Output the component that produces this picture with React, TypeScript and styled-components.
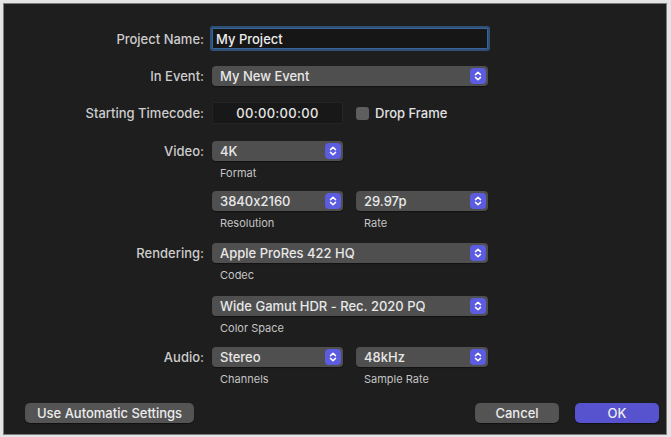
import React from 'react'
import styled, { createGlobalStyle } from 'styled-components'

const GlobalStyle = createGlobalStyle`
  html, body {
    margin: 0;
    padding: 0;
    background: #e4e4e4;
  }
  body {
    font-family: Inter, "Liberation Sans", sans-serif;
    font-feature-settings: "calt" 0;
    -webkit-font-smoothing: antialiased;
  }
  input {
    font-feature-settings: "calt" 0;
  }
`

const Stepper = () => (
  <S.StepperButton>
    <svg width="10" height="12" viewBox="0 0 10 12">
      <path d="M2.5 4.6 L5 2.3 L7.5 4.6" fill="none" stroke="#fff" strokeWidth="1.5" strokeLinecap="round" strokeLinejoin="round" />
      <path d="M2.5 7.4 L5 9.7 L7.5 7.4" fill="none" stroke="#fff" strokeWidth="1.5" strokeLinecap="round" strokeLinejoin="round" />
    </svg>
  </S.StepperButton>
)

interface PopupProps {
  value: string
  caption?: string
}

const Popup = ({ value, caption }: PopupProps) => (
  <S.Field>
    <S.PopupButton>
      <span>{value}</span>
      <Stepper />
    </S.PopupButton>
    {caption && <S.Caption>{caption}</S.Caption>}
  </S.Field>
)

const App = () => {
  return (
    <>
      <GlobalStyle />
      <S.Frame>
        <S.Dialog>
          <S.Row $top={0}>
            <S.Label>Project Name:</S.Label>
            <S.TextInput defaultValue="My Project" />
          </S.Row>

          <S.Row $top={17}>
            <S.Label>In Event:</S.Label>
            <Popup value="My New Event" />
          </S.Row>

          <S.Row $top={16}>
            <S.Label>Starting Timecode:</S.Label>
            <S.Pair>
              <S.Timecode>00:00:00:00</S.Timecode>
              <S.CheckRow>
                <S.Checkbox />
                <span>Drop Frame</span>
              </S.CheckRow>
            </S.Pair>
          </S.Row>

          <S.Row $top={17} $start>
            <S.Label>Video:</S.Label>
            <S.Pair>
              <Popup value="4K" caption="Format" />
            </S.Pair>
          </S.Row>

          <S.Row $top={11} $start>
            <S.Label />
            <S.Pair>
              <Popup value="3840x2160" caption="Resolution" />
              <Popup value="29.97p" caption="Rate" />
            </S.Pair>
          </S.Row>

          <S.Row $top={13} $start>
            <S.Label>Rendering:</S.Label>
            <Popup value="Apple ProRes 422 HQ" caption="Codec" />
          </S.Row>

          <S.Row $top={14} $start>
            <S.Label />
            <Popup value="Wide Gamut HDR - Rec. 2020 PQ" caption="Color Space" />
          </S.Row>

          <S.Row $top={12} $start>
            <S.Label>Audio:</S.Label>
            <S.Pair>
              <Popup value="Stereo" caption="Channels" />
              <Popup value="48kHz" caption="Sample Rate" />
            </S.Pair>
          </S.Row>

          <S.Footer>
            <S.Button $width={169}>Use Automatic Settings</S.Button>
            <S.Actions>
              <S.Button $width={84}>Cancel</S.Button>
              <S.Button $width={84} $primary>OK</S.Button>
            </S.Actions>
          </S.Footer>
        </S.Dialog>
      </S.Frame>
    </>
  )
}

export default App

const S = {
  Frame: styled.div`
    width: 671px;
    height: 437px;
    padding: 4px 5px 3px 4px;
    box-sizing: border-box;
    background: #e4e4e4;
  `,
  Dialog: styled.div`
    width: 662px;
    height: 430px;
    box-sizing: border-box;
    background: #1e1e1e;
    box-shadow: 0 0 0 1px #7c7c7c;
    padding: 24px 0 11px 0;
    display: flex;
    flex-direction: column;
  `,
  Row: styled.div<{ $top: number; $start?: boolean }>`
    display: grid;
    grid-template-columns: 200px 276px;
    column-gap: 8px;
    align-items: ${p => (p.$start ? 'start' : 'center')};
    margin-top: ${p => p.$top}px;
  `,
  Label: styled.div`
    text-align: right;
    color: #cdcdcd;
    font-size: 13px;
    font-weight: 500;
    line-height: 20px;
    white-space: nowrap;
  `,
  TextInput: styled.input`
    box-sizing: border-box;
    width: 276px;
    height: 21px;
    margin: 0;
    padding: 0 3px;
    background: #161616;
    border: 1px solid #3a6497;
    box-shadow: 0 0 0 2px rgba(52, 96, 150, 0.75);
    border-radius: 1px;
    color: #ececec;
    font-family: inherit;
    font-size: 13px;
    font-weight: 500;
    outline: none;
  `,
  Pair: styled.div`
    display: grid;
    grid-template-columns: 131px 132px;
    column-gap: 13px;
    align-items: start;
  `,
  Field: styled.div`
    display: flex;
    flex-direction: column;
  `,
  PopupButton: styled.div`
    box-sizing: border-box;
    height: 20px;
    display: flex;
    align-items: center;
    justify-content: space-between;
    padding: 0 2px 0 8px;
    background: #4f4f4f;
    border-radius: 4px;
    box-shadow: 0 1px 1px rgba(0, 0, 0, 0.4);
    color: #e8e8e8;
    font-size: 13px;
    font-weight: 500;
    white-space: nowrap;
  `,
  StepperButton: styled.div`
    width: 16px;
    height: 16px;
    border-radius: 4px;
    background: #5c5ce0;
    display: flex;
    align-items: center;
    justify-content: center;
  `,
  Caption: styled.div`
    margin-top: 5px;
    padding-left: 8px;
    line-height: 14px;
    font-size: 11px;
    font-weight: 400;
    color: #c4c4c4;
  `,
  Timecode: styled.div`
    box-sizing: border-box;
    height: 22px;
    display: flex;
    align-items: center;
    justify-content: center;
    background: #181818;
    border: 1px solid #242424;
    color: #e6e6e6;
    font-size: 13px;
    font-weight: 500;
    letter-spacing: 0.3px;
  `,
  CheckRow: styled.div`
    align-self: center;
    display: flex;
    align-items: center;
    gap: 6px;
    color: #e2e2e2;
    font-size: 13px;
    font-weight: 500;
  `,
  Checkbox: styled.div`
    width: 13px;
    height: 13px;
    border-radius: 3px;
    background: #5e5e5e;
  `,
  Footer: styled.div`
    margin-top: auto;
    display: flex;
    justify-content: space-between;
    align-items: center;
    padding: 0 7px 0 21px;
  `,
  Actions: styled.div`
    display: flex;
    gap: 16px;
  `,
  Button: styled.div<{ $width: number; $primary?: boolean }>`
    box-sizing: border-box;
    width: ${p => p.$width}px;
    height: 20px;
    display: flex;
    align-items: center;
    justify-content: center;
    border-radius: 5px;
    background: ${p => (p.$primary ? '#5753cf' : '#545454')};
    box-shadow: 0 1px 1px rgba(0, 0, 0, 0.45);
    color: #ececec;
    font-size: 13px;
    font-weight: 500;
    white-space: nowrap;
  `
}
